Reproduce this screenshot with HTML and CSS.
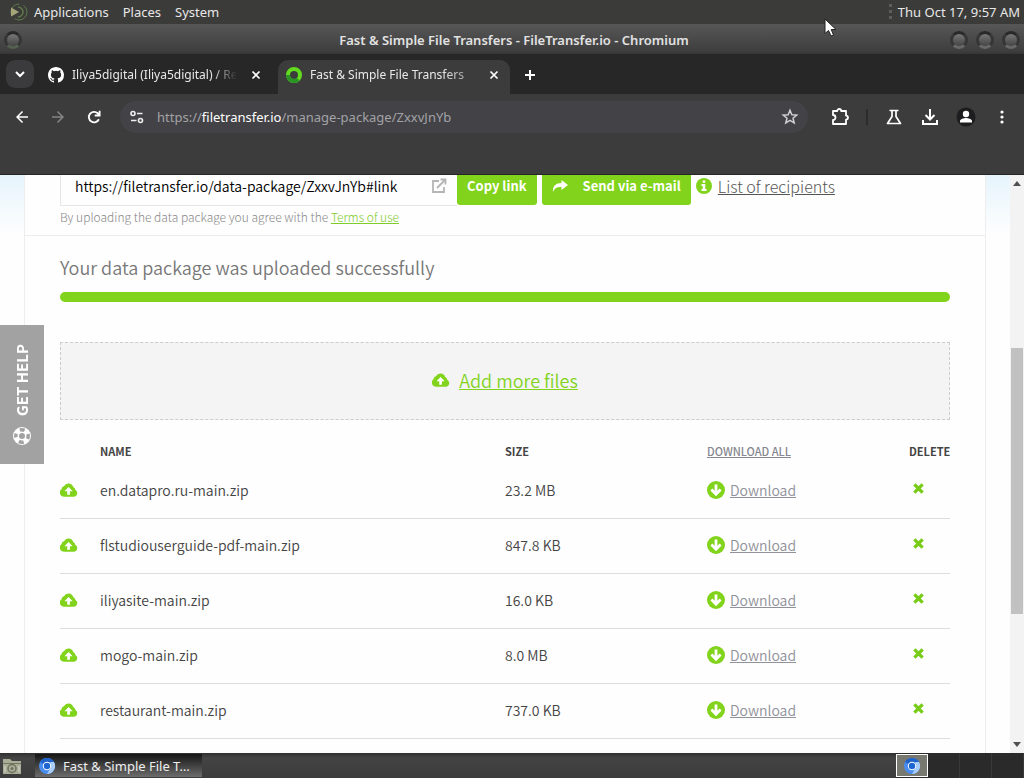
FILE: index.html
```html
<!DOCTYPE html>
<html lang="en">
<head>
<meta charset="utf-8">
<title>Fast &amp; Simple File Transfers - FileTransfer.io</title>
<link rel="stylesheet" href="styles.css">
</head>
<body>
<svg class="sprite" aria-hidden="true">
  <symbol id="cloud" viewBox="0.700 0.300 17.400 13.400"><path fill="#82d31c" d="M4.500 13.500A4 4 0 0 1 2.200 6.200 3 3 0 0 1 4.500 3.300 5 5 0 0 1 13.500 4 3.500 3.500 0 0 1 15.600 7 3.500 3.500 0 0 1 14.500 13.500z"/><path fill="#fff" d="M9 4.200l4 4h-2.700v3.300H7.700V8.200H5z"/></symbol>
  <symbol id="down" viewBox="0 0 18 18"><circle cx="9" cy="9" r="9" fill="#82d31c"/><path fill="none" stroke="#fff" stroke-width="2.800" d="M9 3.500v9.500M4.400 8.600L9 13.200l4.600-4.600"/></symbol>
  <symbol id="cross" viewBox="0 0 12 12"><path fill="none" stroke="#78cc18" stroke-width="3.600" d="M1.500 1.500l9 9M10.500 1.500l-9 9"/></symbol>
  <symbol id="close" viewBox="0 0 10 10"><path fill="none" stroke="#fff" stroke-width="1.700" d="M1.500 1.500l7 7M8.500 1.500l-7 7"/></symbol>
  <symbol id="chromium" viewBox="0 0 18 18"><circle cx="9" cy="9" r="8" fill="#4a8df0"/><path fill="#1f62c9" d="M9 9L2 5.100A8 8 0 0 1 16 5H9z"/><path fill="#a9cdfb" d="M16 5A8 8 0 0 1 9 17l3.500-6V5z"/><circle cx="9" cy="9" r="4.200" fill="#fff"/><circle cx="9" cy="9" r="3.200" fill="#1d66d2"/></symbol>
</svg>

<header class="panel">
  <nav class="panel-menus">
    <button class="panel-button"><svg width="20" height="20" viewBox="0 0 20 20"><circle cx="11" cy="10" r="8" fill="none" stroke="#5f7a4a" stroke-dasharray="17 4"/><path fill="none" stroke="#5f7a4a" stroke-width="1.500" d="M10 5a5 5 0 0 1 0 10"/><path fill="#a4a67a" d="M3 5.500l8 4.500-8 4.500z"/></svg>Applications</button>
    <button class="panel-button">Places</button>
    <button class="panel-button">System</button>
  </nav>
  <span class="grip"></span>
  <time class="clock">Thu Oct 17, 9:57 AM</time>
</header>

<div class="titlebar">
  <button class="orb orb-green" aria-label="Window menu"></button>
  <h1 class="window-title">Fast &amp; Simple File Transfers - FileTransfer.io - Chromium</h1>
  <div class="window-controls">
    <button class="orb" aria-label="Minimize"></button>
    <button class="orb" aria-label="Maximize"></button>
    <button class="orb" aria-label="Close"></button>
  </div>
</div>

<div class="tabstrip">
  <button class="tab-search" aria-label="Search tabs"><svg width="10" height="8" viewBox="0 0 10 8"><path fill="none" stroke="#fff" stroke-width="2" d="M1 2l4 4 4-4"/></svg></button>
  <div class="tab">
    <svg width="16" height="16" viewBox="0 0 16 16"><path fill="#fff" d="M8 0C3.580 0 0 3.580 0 8c0 3.540 2.290 6.530 5.470 7.590.4.070.55-.17.55-.38v-1.490c-2.010.37-2.530-.49-2.690-.94-.09-.23-.48-.94-.82-1.130-.28-.15-.68-.52-.01-.53.630-.01 1.080.58 1.230.82.720 1.210 1.870.87 2.330.66.070-.52.280-.87.510-1.070-1.780-.2-3.640-.89-3.640-3.950 0-.87.310-1.590.82-2.150-.08-.2-.36-1.020.08-2.120 0 0 .67-.21 2.200.82a7.600 7.600 0 0 1 4 0c1.530-1.040 2.200-.82 2.200-.82.440 1.100.160 1.920.080 2.120.510.560.82 1.270.82 2.150 0 3.070-1.870 3.750-3.650 3.950.290.250.540.730.540 1.480v2.200c0 .21.150.46.550.38A8 8 0 0 0 16 8c0-4.420-3.580-8-8-8z"/></svg>
    <span class="tab-title">Iliya5digital (Iliya5digital) / Re</span>
    <button class="tab-close" aria-label="Close tab"><svg width="10" height="10"><use href="#close"/></svg></button>
  </div>
  <div class="tab tab-active">
    <svg width="16" height="16" viewBox="0 0 16 16"><circle cx="8" cy="8" r="6" fill="none" stroke="#62dc1e" stroke-width="4"/><path fill="none" stroke="#2b9424" stroke-width="4" d="M2 8a6 6 0 0 0 10.200 4.200"/></svg>
    <span class="tab-title">Fast &amp; Simple File Transfers</span>
    <button class="tab-close" aria-label="Close tab"><svg width="10" height="10"><use href="#close"/></svg></button>
  </div>
  <button class="new-tab" aria-label="New tab"><svg width="12" height="12" viewBox="0 0 12 12"><path stroke="#fff" stroke-width="2" d="M6 1v10M1 6h10"/></svg></button>
</div>

<div class="toolbar">
  <button class="tool" aria-label="Back"><svg width="18" height="18" viewBox="0 0 24 24"><path fill="#fff" d="M20 11H7.830l5.590-5.590L12 4l-8 8 8 8 1.410-1.410L7.830 13H20z"/></svg></button>
  <button class="tool" aria-label="Forward"><svg width="18" height="18" viewBox="0 0 24 24"><path fill="#858585" d="M4 11h12.170l-5.590-5.590L12 4l8 8-8 8-1.410-1.410L16.170 13H4z"/></svg></button>
  <button class="tool" aria-label="Reload"><svg width="18" height="18" viewBox="0 0 24 24"><path fill="none" stroke="#fff" stroke-width="2.400" d="M18.500 15A7 7 0 1 1 17 7l2 2M19.500 3.500V10H13"/></svg></button>
  <div class="omnibox">
    <svg width="16" height="16" viewBox="0 0 16 16"><g fill="none" stroke="#eee" stroke-width="1.600"><circle cx="4" cy="4.500" r="2"/><path d="M8 4.500h5.500M2 11.500h5.500"/><circle cx="11.500" cy="11.500" r="2"/></g></svg>
    <div class="url" role="textbox" aria-label="Address">https://<span class="url-host">filetransfer.io</span>/manage-package/ZxxvJnYb</div>
    <svg width="18" height="18" viewBox="0 0 24 24"><path fill="none" stroke="#d0d0d2" stroke-width="2" d="M12 3l2.500 6 6.500.5-5 4.200 1.600 6.300L12 16.600 6.400 20 8 13.700 3 9.500 9.500 9z"/></svg>
  </div>
  <button class="tool" aria-label="Extensions"><svg width="20" height="20" viewBox="0 0 20 20"><path fill="none" stroke="#fff" stroke-width="1.800" stroke-linejoin="round" d="M3 4h4.200a2 2 0 0 1 4 0H16v4.600a2 2 0 0 1 0 4V17H3v-4a2.400 2.400 0 0 0 0-5z"/></svg></button>
  <span class="divider"></span>
  <button class="tool" aria-label="Experiments"><svg width="20" height="20" viewBox="0 0 20 20"><path fill="none" stroke="#fff" stroke-width="1.700" stroke-linejoin="round" d="M5.500 3.500h9M8 4v5.500L3.500 16.500h13L12 9.500V4"/></svg></button>
  <button class="tool" aria-label="Downloads"><svg width="20" height="20" viewBox="0 0 20 20"><path fill="none" stroke="#fff" stroke-width="2" d="M10 2v10M5.500 8L10 12.500 14.500 8M3 13v4h14v-4"/></svg></button>
  <button class="tool" aria-label="Profile"><svg width="20" height="20" viewBox="0 0 20 20"><circle cx="10" cy="10" r="9.500" fill="#1d1d1f"/><circle cx="10" cy="7" r="3.200" fill="#fff"/><path fill="#fff" d="M4 15.500v-1.500c0-2 4-3 6-3s6 1 6 3v1.500z"/></svg></button>
  <button class="tool" aria-label="Menu"><svg width="20" height="20" viewBox="0 0 20 20"><g fill="#fff"><circle cx="10" cy="5" r="1.600"/><circle cx="10" cy="10" r="1.600"/><circle cx="10" cy="15" r="1.600"/></g></svg></button>
</div>

<div class="viewport">
  <main class="page">
    <div class="card">
      <section class="share">
        <div class="share-row">
          <div class="link-field">
            <input class="link-input" type="text" aria-label="Package link" value="https://filetransfer.io/data-package/ZxxvJnYb#link">
            <svg width="16" height="16" viewBox="0 0 16 16"><path fill="none" stroke="#b5b5b5" stroke-width="1.800" d="M8 3H2v11h11V9M6 10l8-8M9.500 1.500h5v5"/></svg>
          </div>
          <button class="btn">Copy link</button>
          <button class="btn btn-send"><svg width="16" height="14" viewBox="0 0 16 14"><path fill="#fff" d="M9.500 1L16 6l-6.500 5V8C5 7.600 2.500 9 1 13 .5 7 4 4 9.500 4z"/></svg>Send via e-mail</button>
          <svg class="info" width="16" height="16" viewBox="0 0 16 16"><circle cx="8" cy="8" r="8" fill="#82d31c"/><path fill="#fff" d="M6.700 2.500h2.600v2.300H6.700zM5.500 6h3.800v5h1.200v2h-5v-2h1.200V8H5.500z"/></svg>
          <a class="recipients" href="#">List of recipients</a>
        </div>
        <p class="terms">By uploading the data package you agree with the <a href="#">Terms of use</a></p>
      </section>
      <section class="package">
        <h2 class="status">Your data package was uploaded successfully</h2>
        <div class="progress"></div>
        <div class="dropzone"><svg width="18" height="14"><use href="#cloud"/></svg><a href="#">Add more files</a></div>
        <table class="files">
          <thead>
            <tr><th class="col-icon"></th><th class="col-name">NAME</th><th class="col-size">SIZE</th><th class="col-down"><a href="#">DOWNLOAD ALL</a></th><th class="col-del">DELETE</th></tr>
          </thead>
          <tbody>
            <tr><td><svg width="18" height="14"><use href="#cloud"/></svg></td><td>en.datapro.ru-main.zip</td><td>23.2 MB</td><td><a class="download" href="#"><svg width="18" height="18"><use href="#down"/></svg><span>Download</span></a></td><td><button class="delete" aria-label="Delete en.datapro.ru-main.zip"><svg width="11" height="11"><use href="#cross"/></svg></button></td></tr>
            <tr><td><svg width="18" height="14"><use href="#cloud"/></svg></td><td>flstudiouserguide-pdf-main.zip</td><td>847.8 KB</td><td><a class="download" href="#"><svg width="18" height="18"><use href="#down"/></svg><span>Download</span></a></td><td><button class="delete" aria-label="Delete flstudiouserguide-pdf-main.zip"><svg width="11" height="11"><use href="#cross"/></svg></button></td></tr>
            <tr><td><svg width="18" height="14"><use href="#cloud"/></svg></td><td>iliyasite-main.zip</td><td>16.0 KB</td><td><a class="download" href="#"><svg width="18" height="18"><use href="#down"/></svg><span>Download</span></a></td><td><button class="delete" aria-label="Delete iliyasite-main.zip"><svg width="11" height="11"><use href="#cross"/></svg></button></td></tr>
            <tr><td><svg width="18" height="14"><use href="#cloud"/></svg></td><td>mogo-main.zip</td><td>8.0 MB</td><td><a class="download" href="#"><svg width="18" height="18"><use href="#down"/></svg><span>Download</span></a></td><td><button class="delete" aria-label="Delete mogo-main.zip"><svg width="11" height="11"><use href="#cross"/></svg></button></td></tr>
            <tr><td><svg width="18" height="14"><use href="#cloud"/></svg></td><td>restaurant-main.zip</td><td>737.0 KB</td><td><a class="download" href="#"><svg width="18" height="18"><use href="#down"/></svg><span>Download</span></a></td><td><button class="delete" aria-label="Delete restaurant-main.zip"><svg width="11" height="11"><use href="#cross"/></svg></button></td></tr>
          </tbody>
        </table>
      </section>
    </div>
  </main>
  <div class="scrollbar">
    <svg width="8" height="5" viewBox="0 0 8 5"><path fill="#505050" d="M0 5l4-5 4 5z"/></svg>
    <div class="track"><div class="thumb"></div></div>
    <svg width="8" height="5" viewBox="0 0 8 5"><path fill="#505050" d="M0 0l4 5 4-5z"/></svg>
  </div>
  <button class="help"><svg width="20" height="20" viewBox="0 0 20 20"><circle cx="10" cy="10" r="6" fill="none" stroke="#fff" stroke-width="6"/><circle cx="10" cy="10" r="6.200" fill="none" stroke="#a2a2a2" stroke-width="3.500" stroke-dasharray="5 4.740" stroke-dashoffset="2.500"/></svg>GET HELP</button>
</div>

<footer class="taskbar">
  <button class="desktop" aria-label="Show desktop"><svg width="20" height="18" viewBox="0 0 20 18"><path fill="#a9ad98" d="M1 2h7l2 2h9v13H1z"/><path stroke="#72775f" d="M1 6.500h18"/><circle cx="10" cy="11.500" r="4" fill="none" stroke="#6d725c" stroke-width="1.500"/><circle cx="10" cy="11.500" r="1.500" fill="#6d725c"/><path stroke="#d5d8c8" d="M3 9v6M17 9v6"/></svg></button>
  <button class="task"><svg width="18" height="18"><use href="#chromium"/></svg>Fast &amp; Simple File T…</button>
  <div class="workspaces">
    <button class="workspace workspace-active" aria-label="Workspace 1"><svg width="18" height="18"><use href="#chromium"/></svg></button>
    <button class="workspace" aria-label="Workspace 2"></button>
    <button class="workspace" aria-label="Workspace 3"></button>
    <button class="workspace" aria-label="Workspace 4"></button>
  </div>
</footer>

<svg class="cursor" width="13" height="19" viewBox="0 0 13 19"><path fill="#fff" stroke="#222" d="M1 1v14.500l3.500-3L7 18l2.500-1-2.300-5.500H12z"/></svg>
</body>
</html>
```
FILE: styles.css
```css
* { box-sizing: border-box; }

body {
  margin: 0;
  height: 100vh;
  display: flex;
  flex-direction: column;
  overflow: hidden;
  position: relative;
  background: #3c3c3c;
  color: #e8e8e8;
  font: 13px/20px "Noto Sans", sans-serif;
}

button {
  display: flex;
  align-items: center;
  justify-content: center;
  margin: 0;
  padding: 0;
  border: 0;
  background: none;
  color: inherit;
  font: inherit;
  white-space: nowrap;
}

svg { display: block; flex: none; }
.sprite { position: absolute; width: 0; height: 0; }
.cursor { position: absolute; left: 824px; top: 18px; }

/* Desktop panel */
.panel { display: flex; align-items: center; height: 24px; padding: 0 4px 0 8px; background: #3b3b3a; }
.panel-menus { display: flex; gap: 14px; flex: 1; }
.panel-button { gap: 6px; }
.grip { width: 3px; height: 16px; margin-right: 6px; background: repeating-linear-gradient(#5e5e5e 0 3px, transparent 3px 6px); }

/* Window title */
.titlebar {
  display: grid;
  grid-template-columns: 74px 1fr 70px;
  align-items: center;
  height: 30px;
  padding: 2px 4px 0;
  background: linear-gradient(#575757, #3e3e3e 90%, #363636);
}
.window-title { margin: 0; font-size: 13px; font-weight: 600; text-align: center; color: #e2e2e2; }
.window-controls { display: flex; justify-content: flex-end; gap: 8px; }
.orb {
  flex: none;
  width: 18px;
  height: 18px;
  border: 3px solid;
  border-color: #292929 #363636 #686868;
  border-radius: 50%;
  background: linear-gradient(#777, #444);
}
.orb-green { border-color: #292929 #363636 #53604e; }

/* Tabs */
.tabstrip { display: flex; align-items: center; height: 40px; padding: 6px 6px 0; background: #272727; }
.tab-search { width: 28px; height: 28px; margin-bottom: 6px; border-radius: 9px; background: #3b3b3d; }
.tab { display: flex; align-items: center; gap: 8px; width: 232px; height: 34px; padding: 0 11px 5px 14px; }
.tab:not(.tab-active) { margin-right: 4px; width: 240px; padding-right: 13px; }
.tab-active { padding-left: 8px; border-radius: 10px 10px 0 0; background: #3c3c3c; }
.tab-title {
  flex: 1;
  white-space: nowrap;
  font-size: 12px;
  mask-image: linear-gradient(90deg, #000 85%, transparent);
}
.tab-active .tab-title { mask-image: linear-gradient(90deg, #000 80%, #0006); }
.tab-close { width: 10px; height: 20px; margin-left: 6px; }
.new-tab { width: 40px; height: 28px; margin-bottom: 5px; }

/* Toolbar */
.toolbar { display: flex; align-items: center; height: 81px; padding: 0 4px 35px; background: #3c3c3c; border-bottom: 1px solid #262626; }
.tool { width: 36px; height: 32px; flex: none; }
.omnibox { flex: 1; display: flex; align-items: center; gap: 12px; height: 32px; margin: 0 14px 0 8px; padding: 0 9px; border-radius: 16px; background: #434246; }
.url { flex: 1; font-size: 13px; color: #a2a2a6; }
.url-host { color: #fff; }
.divider { width: 2px; height: 16px; margin: 0 8px; background: #2c2c2c; }

/* Page */
.viewport {
  flex: 1;
  min-height: 0;
  display: flex;
  overflow: hidden;
  position: relative;
  background: #fefefe;
  color: #444;
  font: 350 14px/20px "Noto Sans CJK SC", sans-serif;
}
.page { flex: 1; padding: 0 24px; background: linear-gradient(#e6f4fc, #fefefe 60px); }
.card { min-height: 100%; background: #fefefe; border: solid #eee; border-width: 0 1px; }
.share { padding: 0 35px 8px; border-bottom: 1px solid #ececec; }
.share-row { display: flex; align-items: flex-start; }
.link-field { display: flex; width: 397px; height: 31px; padding: 0 10px 0 14px; border: solid #e6e6e6; border-width: 0 0 1px 1px; }
.link-field svg { margin-top: 3px; }
.link-input { flex: 1; min-width: 0; height: 22px; padding: 0; border: 0; outline: 0; background: none; color: #000; font: inherit; }
.btn { height: 30px; padding: 0 10px 8px; border-radius: 0 0 3px 3px; background: #82d31c; color: #fff; font-size: 13px; font-weight: 700; }
.btn-send { gap: 15px; margin-left: 5px; }
.info { margin: 3px 6px 0 5px; }
.recipients { color: #777; font-size: 16px; line-height: 22px; font-weight: 300; color: #555; }
.terms { margin: 1px 0 0; color: #888; font-size: 12px; font-weight: 300; }
.terms a { color: #7fcc2a; }

.package { padding: 20px 35px; }
.status { margin: 0; font-size: 18px; line-height: 22px; font-weight: 350; color: #777; }
.progress { height: 10px; margin-top: 14px; border-radius: 5px; background: #82d31c; }
.dropzone {
  display: flex;
  align-items: center;
  justify-content: center;
  gap: 9px;
  height: 78px;
  margin-top: 40px;
  padding-bottom: 2px;
  border: 1px dashed #ccc;
  background: #f4f4f4;
  font-size: 18px;
}
.dropzone a { color: #82d31c; }

.files { width: 100%; margin-top: 12px; border-collapse: separate; border-spacing: 0; table-layout: fixed; font-size: 14px; }
.files th { height: 32px; padding: 6px 0 0; text-align: left; vertical-align: middle; font-size: 11px; line-height: 20px; font-weight: 700; }
.files th a { color: #85868f; font-weight: 500; }
.files td { height: 55px; padding: 0 0 2px; vertical-align: middle; border-bottom: 1px solid #ddd; }
.col-icon { width: 40px; }
.col-size { width: 202px; }
.col-down { width: 202px; }
.col-del { width: 41px; }
.download { display: flex; align-items: center; gap: 5px; color: #90919a; text-decoration: none; }
.download span { text-decoration: underline; }
.delete { width: 18px; height: 20px; margin-bottom: 4px; }

.scrollbar { display: flex; flex-direction: column; align-items: center; width: 14px; padding: 6px 0; background: #f3f3f3; }
.track { flex: 1; width: 12px; margin: 6px 0; display: grid; grid-template-rows: 156fr 266fr 122fr; }
.thumb { grid-row: 2; background: #c1c1c1; }

.help {
  position: absolute;
  left: 0;
  top: 150px;
  width: 44px;
  height: 139px;
  gap: 10px;
  background: #a2a2a2;
  color: #fff;
  font-size: 15px;
  font-weight: 700;
  writing-mode: vertical-rl;
  transform: rotate(180deg);
}

/* Taskbar */
.taskbar { display: flex; align-items: stretch; height: 25px; background: linear-gradient(#303030, #444 20%, #3b3b3b); }
.desktop { width: 24px; margin-right: 11px; }
.task { width: 167px; gap: 7px; justify-content: flex-start; padding-left: 3px; margin: 1px 0; background: linear-gradient(#151515, #6c6c6c); color: #eee; }
.workspaces { display: flex; margin-left: auto; background: #2a2a2a; }
.workspace { width: 32px; border-right: 1px solid #383838; }
.workspace-active { height: 23px; margin-top: 1px; border: 1px solid #fff; background: #77786f; }
```
